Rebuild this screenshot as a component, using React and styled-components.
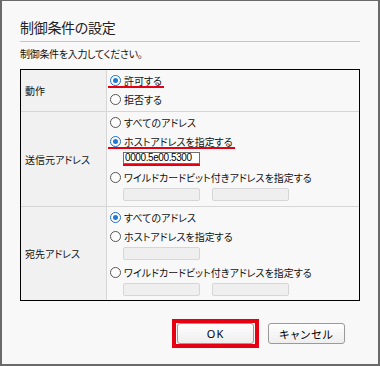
import React from "react";
import styled, { createGlobalStyle } from "styled-components";

const GlobalStyle = createGlobalStyle`
  html, body {
    margin: 0;
    padding: 0;
    background: #f8f8f8;
  }
  body {
    font-family: "Noto Sans CJK JP", "Noto Sans", sans-serif;
    font-feature-settings: "palt";
    color: #111;
  }
`;

const rows = [
  {
    label: "動作",
    items: [
      { kind: "radio", text: "許可する", checked: true, marked: true },
      { kind: "radio", text: "拒否する" },
    ],
  },
  {
    label: "送信元アドレス",
    items: [
      { kind: "radio", text: "すべてのアドレス" },
      { kind: "radio", text: "ホストアドレスを指定する", checked: true, marked: true },
      { kind: "inputs", fields: [{ value: "0000.5e00.5300", marked: true }] },
      { kind: "radio", text: "ワイルドカードビット付きアドレスを指定する" },
      { kind: "inputs", fields: [{}, {}] },
    ],
  },
  {
    label: "宛先アドレス",
    items: [
      { kind: "radio", text: "すべてのアドレス", checked: true },
      { kind: "radio", text: "ホストアドレスを指定する" },
      { kind: "inputs", fields: [{}] },
      { kind: "radio", text: "ワイルドカードビット付きアドレスを指定する" },
      { kind: "inputs", fields: [{}, {}] },
    ],
  },
];

const App = () => {
  return (
    <>
      <GlobalStyle />
      <Dialog>
        <Title>制御条件の設定</Title>
        <Lead>制御条件を入力してください。</Lead>
        <Table>
          {rows.map((row) => (
            <Row key={row.label}>
              <LabelCell>{row.label}</LabelCell>
              <ValueCell>
                {row.items.map((item, i) =>
                  item.kind === "radio" ? (
                    <RadioLine key={i}>
                      <Choice $marked={item.marked}>
                        <Radio $checked={item.checked} />
                        {item.text}
                      </Choice>
                    </RadioLine>
                  ) : (
                    <InputLine key={i}>
                      {item.fields.map((f, j) =>
                        f.value ? (
                          <InputMark key={j}>
                            <TextBox $active>{f.value}</TextBox>
                          </InputMark>
                        ) : (
                          <TextBox key={j} />
                        )
                      )}
                    </InputLine>
                  )
                )}
              </ValueCell>
            </Row>
          ))}
        </Table>
        <Footer>
          <Highlight>
            <Button>OK</Button>
          </Highlight>
          <Button>キャンセル</Button>
        </Footer>
      </Dialog>
    </>
  );
};

const Dialog = styled.div`
  box-sizing: border-box;
  width: 380px;
  height: 366px;
  border: 2px solid #6a6a6a;
  border-top-width: 1px;
  background: #f8f8f8;
  padding: 0 18px;
`;

const Title = styled.div`
  padding: 14px 0 2px;
  font-size: 14px;
  letter-spacing: -0.3px;
  line-height: 24px;
  color: #222;
  border-bottom: 1px solid #c6c6c6;
`;

const Lead = styled.div`
  margin: 4px 0 7px;
  font-size: 10px;
  letter-spacing: -0.3px;
  line-height: 16px;
`;

const Table = styled.div`
  border: 1px solid #000;
`;

const Row = styled.div`
  display: grid;
  grid-template-columns: 86px 1fr;
  border-top: 1px solid #d6d6d6;

  &:first-child {
    border-top: none;
  }
`;

const LabelCell = styled.div`
  display: flex;
  align-items: center;
  padding-left: 4px;
  font-size: 10px;
  background: #f1f1f1;
  border-right: 1px solid #d6d6d6;
`;

const ValueCell = styled.div`
  padding: 1px 0 2px 1px;
  background: #f8f8f8;

  ${Row}:last-child & {
    padding-bottom: 1px;
  }
`;

const RadioLine = styled.div`
  height: 19px;
  display: flex;
  align-items: stretch;
  font-size: 10px;
`;

const Choice = styled.span`
  position: relative;
  display: inline-flex;
  align-items: center;
  padding: 0 ${(p) => (p.$marked ? "2px" : "0")} 0 1px;

  &::after {
    content: "";
    display: ${(p) => (p.$marked ? "block" : "none")};
    position: absolute;
    left: 0;
    right: 0;
    bottom: 2px;
    height: 2px;
    background: #e60012;
  }
`;

const Radio = styled.span`
  position: relative;
  box-sizing: border-box;
  width: 11px;
  height: 11px;
  margin: 0 3px 0 1px;
  border-radius: 50%;
  border: 1px solid ${(p) => (p.$checked ? "#1a6fc4" : "#555")};
  background: #fff;

  &::after {
    content: "";
    display: ${(p) => (p.$checked ? "block" : "none")};
    position: absolute;
    left: 2px;
    top: 2px;
    width: 5px;
    height: 5px;
    border-radius: 50%;
    background: #1f7ad6;
  }
`;

const InputLine = styled.div`
  height: 17px;
  box-sizing: border-box;
  padding: 1px 0 0 15px;
  display: flex;
  align-items: flex-start;
  gap: 12px;
`;

const InputMark = styled.span`
  display: inline-flex;
  border-bottom: 2px solid #e60012;
`;

const TextBox = styled.span`
  box-sizing: border-box;
  width: 77px;
  height: ${(p) => (p.$active ? "12px" : "13px")};
  padding-left: 1px;
  border: 1px solid ${(p) => (p.$active ? "#6e6e6e" : "#d6d6d6")};
  border-radius: ${(p) => (p.$active ? "0" : "2px")};
  background: ${(p) => (p.$active ? "#fff" : "#efefef")};
  font-family: "Liberation Sans", Arial, sans-serif;
  font-size: 10px;
  letter-spacing: -0.4px;
  line-height: 10px;
  color: #000;
  overflow: hidden;
  white-space: nowrap;
`;

const Footer = styled.div`
  display: flex;
  justify-content: flex-end;
  align-items: center;
  gap: 9px;
  padding: 18px 15px 0 0;
`;

const Highlight = styled.div`
  display: flex;
  border: 4px solid #e60012;
  padding: 0 1px;
`;

const Button = styled.button`
  box-sizing: border-box;
  width: 77px;
  height: 21px;
  padding: 0;
  border: 1px solid #9a9a9a;
  border-radius: 3px;
  background: linear-gradient(#fefefe, #eeeeee);
  font-family: "Noto Sans", "Noto Sans CJK JP", sans-serif;
  font-feature-settings: "palt";
  font-weight: 400;
  font-size: 11px;
  letter-spacing: 1px;
  color: #000;
`;

export default App;
